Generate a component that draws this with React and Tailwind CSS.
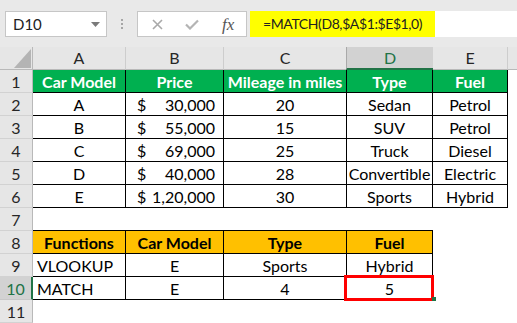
import React from 'react';

// largeurs des colonnes : en-tête de ligne, A..E, bout de F
const letters = ['A', 'B', 'C', 'D', 'E'];

const cars = [
  ['A', '30,000', '20', 'Sedan', 'Petrol'],
  ['B', '55,000', '15', 'SUV', 'Petrol'],
  ['C', '69,000', '25', 'Truck', 'Diesel'],
  ['D', '40,000', '28', 'Convertible', 'Electric'],
  ['E', '1,20,000', '30', 'Sports', 'Hybrid'],
];

function RowHead({ n, active }) {
  if (active) {
    return (
      <div className="flex items-center justify-center bg-[#d2d2d2] border-r-2 border-r-[#217346] border-b border-b-[#c8c8c8] text-[#217346] pt-[1px]">
        {n}
      </div>
    );
  }
  return (
    <div className="flex items-center justify-center bg-[#e6e6e6] border-r border-r-[#b9b9b9] border-b border-b-[#d2d2d2] text-[#262626] pt-[1px]">
      {n}
    </div>
  );
}

function Cell({ children, className = '' }) {
  return <div className={`flex items-center justify-center pt-[1px] ${className}`}>{children}</div>;
}

export default function App() {
  return (
    <div className="w-[517px] h-[323px] overflow-hidden bg-white text-[16px] leading-none font-[family-name:Lato,'Liberation_Sans',sans-serif]">
      {/* barre de formule */}
      <div className="h-[47px] bg-[#e9e9e9] flex items-start pt-[11px]">
        <div className="ml-[5px] w-[102px] h-[26px] bg-white border border-[#c6c6c6] flex items-center pl-[7px] text-[15px] text-[#222]">
          D10
          <svg className="ml-auto mr-[6px]" width="9" height="5" viewBox="0 0 9 5">
            <path d="M0 0 L9 0 L4.5 5 Z" fill="#7a7a7a" />
          </svg>
        </div>
        <div className="w-[30px] h-[26px] flex flex-col items-center justify-center gap-[2px]">
          <div className="w-[2px] h-[2px] bg-[#a6a6a6]" />
          <div className="w-[2px] h-[2px] bg-[#a6a6a6]" />
          <div className="w-[2px] h-[2px] bg-[#a6a6a6]" />
        </div>
        <div className="w-[110px] h-[26px] bg-white border border-[#c6c6c6] flex items-center">
          <svg className="ml-[14px]" width="11" height="11" viewBox="0 0 11 11">
            <path d="M1 1 L10 10 M10 1 L1 10" stroke="#a9a9a9" strokeWidth="1.6" />
          </svg>
          <svg className="ml-[22px]" width="14" height="11" viewBox="0 0 14 11">
            <path d="M1 5.5 L5 9.5 L13 1.5" stroke="#b4b4b4" strokeWidth="2.2" fill="none" />
          </svg>
          <span className="ml-[23px] text-[17px] italic text-[#555] font-[family-name:'Liberation_Serif',serif]">fx</span>
        </div>
        <div className="ml-[3px] w-[185px] h-[26px] bg-[#ffff00] flex items-center pl-[13px] text-[14px] tracking-[-0.4px] whitespace-nowrap text-[#222]">
          =MATCH(D8,$A$1:$E$1,0)
        </div>
        <div className="flex-1 h-[26px] bg-white" />
      </div>

      <div className="relative grid grid-cols-[33px_93px_98px_123px_86px_75px_9px] auto-rows-[23px]">
        {/* en-têtes de colonnes */}
        <div className="bg-[#e6e6e6] border-r border-r-[#b9b9b9] border-b border-b-[#b9b9b9] flex items-end justify-end pr-[1px] pb-[1px]">
          <svg width="17" height="19" viewBox="0 0 17 19">
            <path d="M17 0 L17 19 L0 19 Z" fill="#b4b4b4" />
          </svg>
        </div>
        {letters.map((l) =>
          l === 'D' ? (
            <div key={l} className="flex items-center justify-center bg-[#d2d2d2] border-l border-l-[#a9a9a9] border-b-2 border-b-[#217346] text-[#217346] -ml-[1px]">
              {l}
            </div>
          ) : (
            <div key={l} className="flex items-center justify-center bg-[#e6e6e6] border-r border-r-[#cdcdcd] border-b border-b-[#b9b9b9] text-[#262626]">
              {l}
            </div>
          )
        )}
        <div className="bg-[#e6e6e6] border-b border-b-[#b9b9b9]" />

        {/* ligne 1 */}
        <RowHead n={1} />
        {['Car Model', 'Price', 'Mileage in miles', 'Type', 'Fuel'].map((h) => (
          <Cell key={h} className="bg-[#00b050] text-white font-bold border-r border-b border-black">
            {h}
          </Cell>
        ))}
        <div />

        {/* lignes 2 à 6 */}
        {cars.map((r, i) => (
          <React.Fragment key={i}>
            <RowHead n={i + 2} />
            <Cell className="border-r border-b border-black">{r[0]}</Cell>
            <div className="flex items-center justify-between pl-[11px] pr-[8px] pt-[1px] border-r border-b border-black">
              <span>$</span>
              <span>{r[1]}</span>
            </div>
            <Cell className="border-r border-b border-black">{r[2]}</Cell>
            <Cell className="border-r border-b border-black">{r[3]}</Cell>
            <Cell className="border-r border-b border-black">{r[4]}</Cell>
            <div />
          </React.Fragment>
        ))}

        {/* ligne 7 */}
        <RowHead n={7} />
        <div className="border-b border-black" />
        <div className="border-b border-black" />
        <div className="border-b border-black" />
        <div className="border-b border-black" />
        <div />
        <div />

        {/* ligne 8 */}
        <RowHead n={8} />
        {['Functions', 'Car Model', 'Type', 'Fuel'].map((h) => (
          <Cell key={h} className="bg-[#ffc000] text-black font-bold border-r border-b border-black">
            {h}
          </Cell>
        ))}
        <div />
        <div />

        {/* ligne 9 */}
        <RowHead n={9} />
        <div className="flex items-center pl-[4px] pt-[1px] border-r border-b border-black">VLOOKUP</div>
        <Cell className="border-r border-b border-black">E</Cell>
        <Cell className="border-r border-b border-black">Sports</Cell>
        <Cell className="border-r border-b border-black">Hybrid</Cell>
        <div />
        <div />

        {/* ligne 10 */}
        <RowHead n={10} active />
        <div className="flex items-center pl-[4px] pt-[1px] border-r border-b border-black">MATCH</div>
        <Cell className="border-r border-b border-black">E</Cell>
        <Cell className="border-r border-b border-black">4</Cell>
        <Cell className="border-r border-b border-black">5</Cell>
        <div />
        <div />

        {/* ligne 11 */}
        <RowHead n={11} />
        <div />
        <div />
        <div />
        <div />
        <div />
        <div />

        {/* cellule active D10 */}
        <div className="absolute left-[344px] top-[228px] w-[90px] h-[26px] border-[3px] border-[#ff0000]" />
        <div className="absolute left-[432px] top-[250px] w-[4px] h-[4px] bg-[#217346]" />
      </div>
    </div>
  );
}
